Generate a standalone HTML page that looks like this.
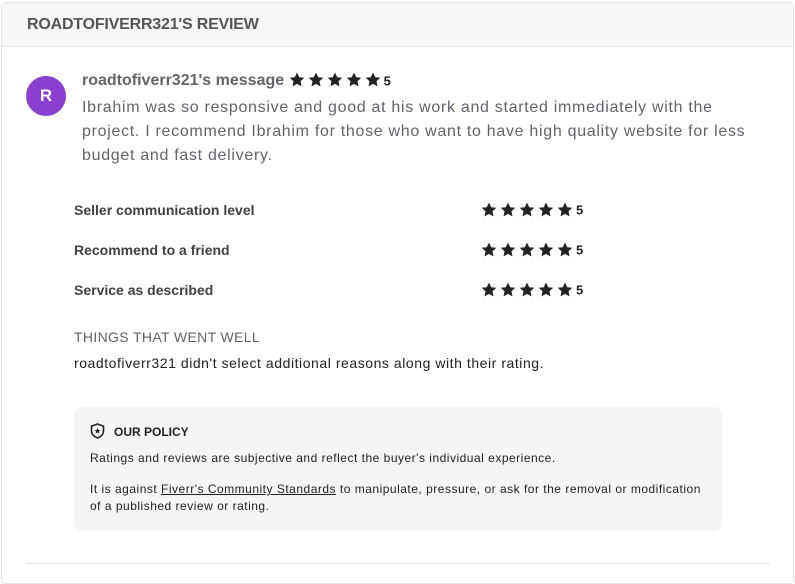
<!DOCTYPE html><html><head><style>
body{margin:0;width:795px;height:571px;background:#fff;font-family:"Liberation Sans",sans-serif;position:relative;overflow:hidden}
.card{position:absolute;left:1px;top:2px;width:791px;height:580px;border:1px solid #e4e5e7;border-radius:4px}
.hdr{height:43px;background:#f7f7f7;border-bottom:1px solid #e4e5e7;font-size:16px;font-weight:bold;color:#555;line-height:43px;padding-left:25px;letter-spacing:-0.2px}
.a{position:absolute}
.av{left:26px;top:76px;width:40px;height:40px;border-radius:50%;background:#8a3fd1;color:#fff;font-weight:bold;font-size:17px;text-align:center;line-height:40px}
.lbl{font-size:14px;font-weight:bold;color:#404145}
.n{font-size:13px;font-weight:bold;color:#222;vertical-align:middle}
</style></head><body>
<div class="card"><div class="hdr">ROADTOFIVERR321'S REVIEW</div></div>
<div class="a av">R</div>
<div class="a" style="left:82px;top:72px;font-size:16px;font-weight:bold;color:#62646a">roadtofiverr321's message <span id="s0"></span></div>
<div class="a" style="left:82px;top:96px;width:700px;font-size:16px;line-height:24px;color:#62646a;letter-spacing:0.7px">Ibrahim was so responsive and good at his work and started immediately with the<br>project. I recommend Ibrahim for those who want to have high quality website for less<br>budget and fast delivery.</div>
<div class="a lbl" style="left:74px;top:202px">Seller communication level</div>
<div class="a lbl" style="left:74px;top:242px">Recommend to a friend</div>
<div class="a lbl" style="left:74px;top:282px">Service as described</div>
<div class="a r" style="left:481px;top:201px"></div>
<div class="a r" style="left:481px;top:241px"></div>
<div class="a r" style="left:481px;top:281px"></div>
<div class="a" style="left:74px;top:329px;font-size:14px;color:#62646a;letter-spacing:0.35px">THINGS THAT WENT WELL</div>
<div class="a" style="left:74px;top:355px;font-size:14px;color:#222;letter-spacing:0.55px">roadtofiverr321 didn't select additional reasons along with their rating.</div>
<div class="a" style="left:74px;top:407px;width:648px;height:124px;background:#f5f5f5;border-radius:8px"></div>
<svg class="a" style="left:90px;top:423px" width="15" height="16" viewBox="0 0 15 16"><path d="M7.5 1L13.5 3.2V8c0 3.3-2.6 5.8-6 7C4.1 13.8 1.5 11.3 1.5 8V3.2z" fill="none" stroke="#222" stroke-width="1.6"/><path d="M7.5 5l.9 1.9 2 .2-1.5 1.4.4 2-1.8-1-1.8 1 .4-2L4.6 7.1l2-.2z" fill="#222"/></svg>
<div class="a" style="left:114px;top:425px;font-size:12px;font-weight:bold;color:#222">OUR POLICY</div>
<div class="a" style="left:90px;top:451px;font-size:12px;color:#222;letter-spacing:0.5px">Ratings and reviews are subjective and reflect the buyer's individual experience.</div>
<div class="a" style="left:90px;top:481px;width:620px;font-size:12px;line-height:17px;color:#222;letter-spacing:0.5px">It is against <u>Fiverr's Community Standards</u> to manipulate, pressure, or ask for the removal or modification of a published review or rating.</div>
<div class="a" style="left:26px;top:563px;width:744px;height:1px;background:#e4e5e7"></div>
<script>
var star='<svg width="16" height="15" viewBox="0 0 16 15" style="margin-right:3px;vertical-align:middle"><path d="M8 0.5l2.2 4.7 5.1.6-3.8 3.5 1 5.1L8 11.9l-4.5 2.5 1-5.1L.7 5.8l5.1-.6z" fill="#222"/></svg>';
var s5=star.repeat(5);
document.getElementById('s0').innerHTML='<span style="position:relative;top:-1px">'+s5+'</span><span class="n">5</span>';
document.querySelectorAll('.r').forEach(function(e){e.innerHTML=s5+'<span class="n">5</span>'});
</script>
</body></html>
